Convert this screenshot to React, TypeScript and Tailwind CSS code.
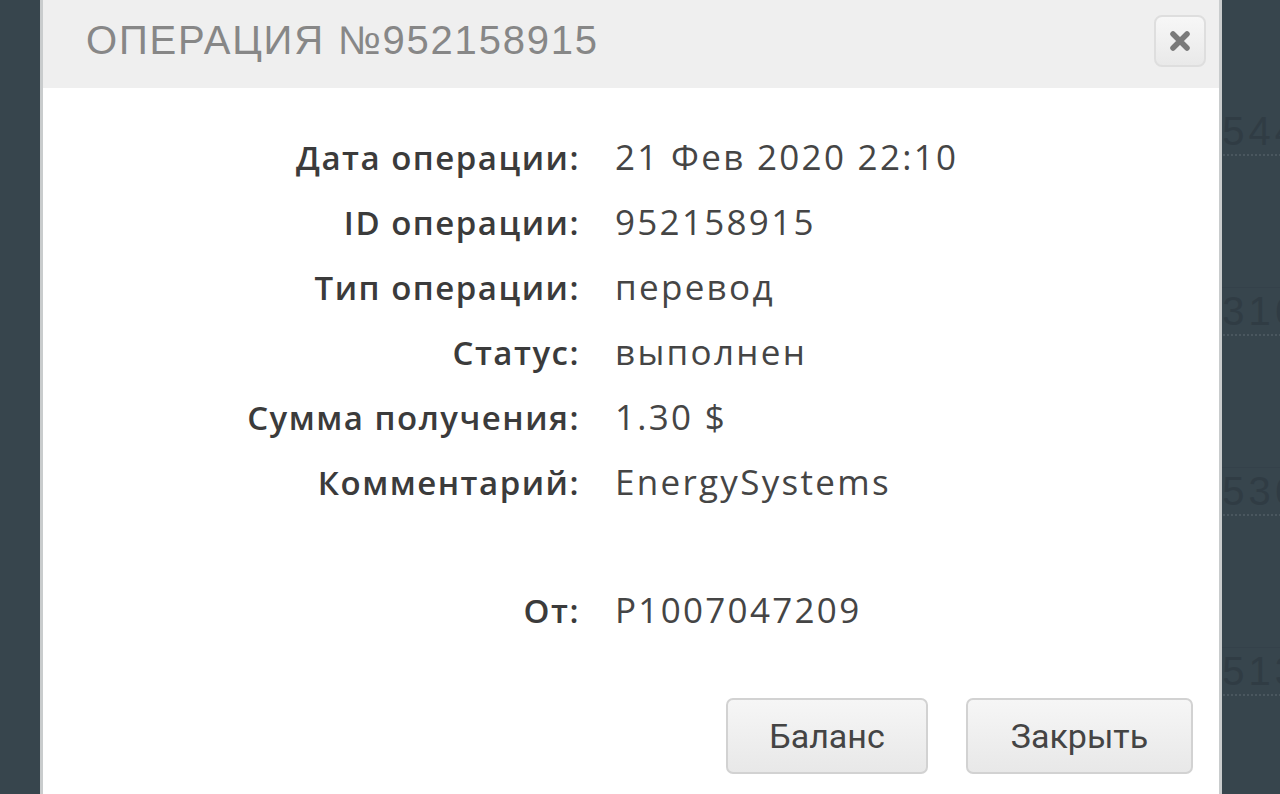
import React from "react";

const rows: [string, string][] = [
  ["Дата операции:", "21 Фев 2020 22:10"],
  ["ID операции:", "952158915"],
  ["Тип операции:", "перевод"],
  ["Статус:", "выполнен"],
  ["Сумма получения:", "1.30 $"],
  ["Комментарий:", "EnergySystems"],
];

const bgNums = ["2544", "4316", "7536", "6513"];

export default function App() {
  return (
    <div className="flex h-[794px] w-[1280px] overflow-hidden bg-[#37454d]">
      <div className="w-[40px] shrink-0" />
      <div className="flex w-[1182px] shrink-0 flex-col border-x-[3px] border-x-[#c9cccd] bg-white">
        <div className="flex h-[88px] shrink-0 items-start justify-between bg-[#efefef] pl-[43px] pr-[13px]">
          <div
            className="pt-[16px] text-[40px] leading-[48px] tracking-[1.8px] text-[#878787]"
            style={{ fontFamily: '"Liberation Sans", sans-serif' }}
          >
            ОПЕРАЦИЯ №952158915
          </div>
          <button className="mt-[15px] flex h-[52px] w-[52px] items-center justify-center rounded-[8px] border-2 border-[#dedede] bg-gradient-to-b from-[#f7f7f7] to-[#e9e9e9]">
            <svg width="22" height="22" viewBox="0 0 22 22">
              <path d="M4 4 L18 18 M18 4 L4 18" stroke="#7a7a7a" strokeWidth="5.5" strokeLinecap="round" />
            </svg>
          </button>
        </div>
        <div
          className="flex flex-1 flex-col pt-[37px]"
          style={{ fontFamily: '"Open Sans", sans-serif' }}
        >
          {rows.map(([l, v]) => (
            <div key={l} className="flex h-[65px] items-center">
              <div className="w-[537px] shrink-0 text-right text-[33px] font-semibold tracking-[1.5px] text-[#3b3b3b]">{l}</div>
              <div className="pl-[35px] text-[35px] tracking-[2.3px] text-[#454545]">{v}</div>
            </div>
          ))}
          <div className="mt-[63px] flex h-[65px] items-center">
            <div className="w-[537px] shrink-0 text-right text-[33px] font-semibold tracking-[1.5px] text-[#3b3b3b]">От:</div>
            <div className="pl-[35px] text-[35px] tracking-[2.3px] text-[#454545]">P1007047209</div>
          </div>
          <div
            className="mt-[55px] flex justify-end gap-[38px] pr-[26px]"
            style={{ fontFamily: "Roboto, sans-serif" }}
          >
            <button className="h-[76px] w-[202px] rounded-[7px] border-2 border-[#d2d2d2] bg-gradient-to-b from-[#f6f6f6] to-[#e8e8e8] text-[34px] text-[#444]">
              Баланс
            </button>
            <button className="h-[76px] w-[227px] rounded-[7px] border-2 border-[#d2d2d2] bg-gradient-to-b from-[#f6f6f6] to-[#e8e8e8] text-[34px] text-[#444]">
              Закрыть
            </button>
          </div>
        </div>
      </div>
      <div className="flex flex-1 flex-col overflow-hidden pt-[108px]">
        {bgNums.map((n) => (
          <div key={n} className="h-[180px] shrink-0 border-b border-[#34414a]">
            <div className="ml-[-26px] w-max border-b-2 border-dotted border-[#4a575f] text-[40px] leading-[46px] tracking-[4px] text-[#303c44]" style={{ fontFamily: '"Liberation Sans", sans-serif' }}>
              {n}
            </div>
          </div>
        ))}
      </div>
    </div>
  );
}
